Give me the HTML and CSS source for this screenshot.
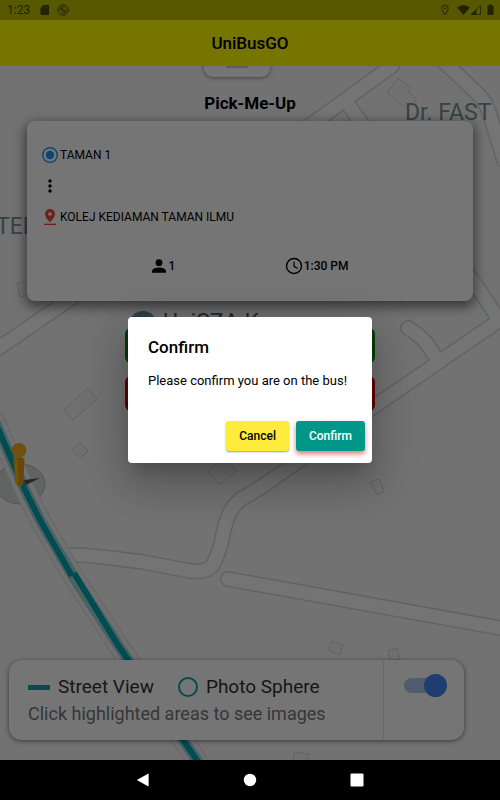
FILE: index.html
```
<!DOCTYPE html>
<html lang="en">

<head>
    <meta charset="UTF-8">
    <meta name="viewport" content="width=device-width, initial-scale=1.0">
    <title>UniBusGO</title>
    <link rel="stylesheet" href="styles.css">
</head>

<body>
    <div class="screen">
        <div class="status-bar">
            <span class="time">1:23</span>
            <svg width="10" height="12" viewBox="0 0 10 12"><path d="M3.5 1H8.500Q9 1 9 1.500V10.500Q9 11 8.500 11H1Q.5 11 .5 10.500V4Z" fill="currentColor"/><path d="M3.500 2.500V4M5.300 2.500V4M7.100 2.500V4" stroke="#8a8a00" stroke-width=".7"/></svg>
            <svg class="sync" width="12" height="12" viewBox="0 0 12 12" fill="none" stroke="currentColor"><circle cx="6" cy="6" r="5.300"/><path d="M3.200 7.600A3.200 3.200 0 0 1 8 3.500M8.900 4.600A3.200 3.200 0 0 1 4.200 8.600"/><path d="M4 4L8.500 8.500" stroke-width="1.500"/></svg>
            <span class="spacer"></span>
            <svg class="pin" width="8" height="12" viewBox="0 0 8 12" fill="none" stroke="currentColor"><path d="M4 10.800C2 8 .8 6.200.8 4.200A3.200 3.200 0 0 1 7.200 4.200C7.200 6.200 6 8 4 10.800Z"/><circle cx="4" cy="4.200" r="1" fill="currentColor" stroke="none"/></svg>
            <svg width="13" height="12" viewBox="0 0 13 12"><path d="M0 3.500Q6.500-1.500 13 3.500L6.500 11Z" fill="currentColor"/></svg>
            <svg class="signal" width="11" height="12" viewBox="0 0 11 12"><path d="M10.500 1.500V10.500H1.200Z" fill="none" stroke="currentColor" stroke-width=".8"/><path d="M6.500 5V11H.5Z" fill="currentColor"/></svg>
            <svg width="7" height="12" viewBox="0 0 7 12"><path d="M2.200.5H4.800V1.500H6.500V11H.5V1.500H2.200Z" fill="currentColor"/></svg>
        </div>

        <header class="app-bar">
            <h1>UniBusGO</h1>
        </header>

        <main class="map-area">
            <svg class="map" viewBox="0 66 500 694" preserveAspectRatio="xMidYMid slice" aria-hidden="true">
                <defs>
                    <g id="roads">
                        <path d="M-10 354L60 306L392 66"/>
                        <path d="M350 107L484 297L496 315"/>
                        <path d="M446 64L476 92Q485 100 489 112L504 160"/>
                        <path d="M72 555Q82 554 143 562L190 571Q208 573 213 564Q218 556 222 540C226 515 232 503 248 495C268 484 280 473 296 463L372 408L510 313"/>
                        <path d="M408 328Q424 338 429 347L438 361"/>
                        <path d="M228 579L500 628L520 631"/>
                    </g>
                </defs>
                <rect y="66" width="500" height="694" fill="#f8f8f8"/>
                <use href="#roads" class="road-edge"/>
                <use href="#roads" class="road"/>
                <g class="buildings">
                    <path d="M387 93L398 78L411 88L409 92L417 99L407 109Z"/>
                    <path d="M17 283L27 281L30 295L20 297Z"/>
                    <path d="M64 410L88 388L97 399L73 420Z"/>
                    <path d="M72 450L79 442L88 451L80 458Z"/>
                    <path d="M208 472L222 458L237 471L219 485Z"/>
                    <path d="M370 482L379 479L384 491L377 495Z"/>
                    <path d="M328 650L332 641L343 645L340 655Z"/>
                    <path d="M388 651L397 648L400 659L390 661Z"/>
                    <path d="M294 752L309 754L307 764L293 762Z"/>
                </g>
                <ellipse cx="20" cy="484" rx="25" ry="20" fill="#d5d8d8" stroke="#b5b9b9"/>
                <g class="route">
                    <path class="route-edge" d="M-8 415L25 490L40 520L73 576L118 645L205 772"/>
                    <path class="route-fill" d="M-8 415L25 490L40 520L73 576L118 645L205 772"/>
                    <path class="route-halo" d="M-8 415L25 490L40 520L73 576L118 645L205 772"/>
                    <path class="route-line" d="M-8 415L25 490L40 520L72 576M74 573L118 645L205 772"/>
                </g>
                <path d="M40 478L24 480L26 485Z" fill="#555"/>
                <path d="M13 458H24.500L23.500 483L21 487L16 484Z" fill="#e59b16"/>
                <path d="M16 459L17 484" stroke="#fbbc04" stroke-width="3"/>
                <circle cx="19" cy="450.500" r="7" fill="#f6b11a" stroke="#d88f10" stroke-width=".7"/>
                <circle cx="143" cy="325" r="14" fill="#6f8fa3"/>
                <g class="map-labels">
                    <text x="405" y="120">Dr. FAST</text>
                    <text x="-4" y="234">TEM</text>
                    <text x="163" y="330" class="poi">UniSZA K</text>
                </g>
            </svg>

            <div class="drag-tab"></div>

            <div class="content">
                <h2>Pick-Me-Up</h2>
                <section class="trip-card">
                    <div class="stop">
                        <svg width="16" height="16" viewBox="0 0 16 16"><circle cx="8" cy="8" r="7.300" fill="none" stroke="#2196f3" stroke-width="1.400"/><circle cx="8" cy="8" r="4.200" fill="#2196f3"/></svg>
                        <span>TAMAN 1</span>
                    </div>
                    <div class="stop">
                        <svg width="16" height="16" viewBox="0 0 16 16"><circle cx="8" cy="3" r="1.700"/><circle cx="8" cy="8" r="1.700"/><circle cx="8" cy="13" r="1.700"/></svg>
                    </div>
                    <div class="stop">
                        <svg width="16" height="16" viewBox="0 0 16 16" fill="#f44336"><path fill-rule="evenodd" d="M8 0A5 5 0 0 1 13 5C13 8.500 8 13.300 8 13.300S3 8.500 3 5A5 5 0 0 1 8 0ZM8 3.200A1.800 1.800 0 1 0 8 6.800A1.800 1.800 0 1 0 8 3.200Z"/><path d="M2 14.700H14V16H2Z"/></svg>
                        <span>KOLEJ KEDIAMAN TAMAN ILMU</span>
                    </div>
                    <div class="trip-info">
                        <div class="info">
                            <svg width="16" height="16" viewBox="0 0 16 16"><circle cx="8" cy="4.700" r="3.400"/><path d="M1 14.700V13C1 10.600 5.500 9.500 8 9.500S15 10.600 15 13V14.700Z"/></svg>
                            <span>1</span>
                        </div>
                        <div class="info">
                            <svg width="18" height="18" viewBox="0 0 18 18" fill="none" stroke="#000" stroke-width="1.400"><circle cx="9" cy="9" r="7.500"/><path d="M9 4.800V9.300L12.600 11.400" stroke-width="1.200"/></svg>
                            <span>1:30 PM</span>
                        </div>
                    </div>
                </section>
                <button class="ride-btn on-bus" type="button" aria-label="On the bus"></button>
                <button class="ride-btn cancel-ride" type="button" aria-label="Cancel pick-up"></button>
            </div>

            <div class="street-panel">
                <div class="legend">
                    <div class="legend-row">
                        <span class="line-key"></span>
                        <span>Street View</span>
                        <span class="sphere-key"></span>
                        <span>Photo Sphere</span>
                    </div>
                    <p>Click highlighted areas to see images</p>
                </div>
                <div class="toggle">
                    <input type="checkbox" class="switch" aria-label="Street View layer" checked>
                </div>
            </div>
        </main>

        <div class="scrim">
            <div class="dialog" role="dialog" aria-labelledby="dialog-title">
                <h3 id="dialog-title">Confirm</h3>
                <p>Please confirm you are on the bus!</p>
                <div class="actions">
                    <button class="btn btn-cancel" type="button">Cancel</button>
                    <button class="btn btn-confirm" type="button">Confirm</button>
                </div>
            </div>
        </div>
    </div>

    <nav class="nav-bar">
        <button type="button" aria-label="Back"><svg width="14" height="14" viewBox="0 0 14 14"><path d="M.8 7L12 .8Q12.600.6 12.600 1.200V12.800Q12.600 13.400 12 13.200Z"/></svg></button>
        <button type="button" aria-label="Home"><svg width="14" height="14" viewBox="0 0 14 14"><circle cx="7" cy="7" r="6.200"/></svg></button>
        <button type="button" aria-label="Overview"><svg width="14" height="14" viewBox="0 0 14 14"><rect x=".5" y=".5" width="13" height="13" rx="1"/></svg></button>
    </nav>
</body>

</html>
```

FILE: styles.css
```
* {
    box-sizing: border-box;
}

body {
    font-family: Roboto, sans-serif;
    margin: 0;
    min-height: 100vh;
    display: flex;
    flex-direction: column;
    background-color: #000;
    color: #000;
}

h1, h2, h3, p {
    margin: 0;
}

button {
    font-family: inherit;
    border: none;
    cursor: pointer;
}

.screen {
    position: relative;
    flex: 1;
    display: flex;
    flex-direction: column;
}

/* status bar */
.status-bar {
    height: 20px;
    padding: 0 6px 0 7px;
    display: flex;
    align-items: center;
    background-color: #bfbf00;
    color: #4d4d00;
}

.time {
    font-size: 12px;
    margin-right: 10px;
}

.sync {
    margin-left: 7px;
}

.spacer {
    flex: 1;
}

.pin {
    margin-right: 8px;
}

.signal {
    margin-right: 6px;
}

.app-bar {
    height: 46px;
    display: flex;
    align-items: center;
    justify-content: center;
    background-color: #ff0;
}

.app-bar h1 {
    font-size: 17px;
    font-weight: 500;
}

/* map */
.map-area {
    position: relative;
    flex: 1;
    display: flex;
    flex-direction: column;
    overflow: hidden;
}

.map {
    position: absolute;
    inset: 0;
    width: 100%;
    height: 100%;
}

.road-edge {
    fill: none;
    stroke: #d0d8d8;
    stroke-width: 16;
    stroke-linecap: round;
    stroke-linejoin: round;
}

.road {
    fill: none;
    stroke: #fdfdfd;
    stroke-width: 13;
    stroke-linecap: round;
    stroke-linejoin: round;
}

.buildings {
    fill: #f4f5f5;
    stroke: #d0d5d7;
}

.route {
    fill: none;
}

.route-edge {
    stroke: #dcdcdc;
    stroke-width: 21;
}

.route-fill {
    stroke: #f4f4f4;
    stroke-width: 19;
}

.route-halo {
    stroke: #a3d5da;
    stroke-width: 11;
}

.route-line {
    stroke: #00a5b0;
    stroke-width: 6;
}

.map-labels {
    font-size: 23px;
    fill: #78909c;
}

.poi {
    fill: #3f6379;
}

.drag-tab {
    position: absolute;
    top: -20px;
    left: 204px;
    width: 66px;
    height: 31px;
    padding: 20px 22px 0;
    border-radius: 9px;
    background-color: #fff;
    box-shadow: 0 1px 4px rgba(0, 0, 0, 0.4);
}

.drag-tab::before {
    content: "";
    display: block;
    height: 2px;
    background-color: #ccc;
}

.content {
    position: relative;
    display: flex;
    flex-direction: column;
    align-items: center;
    padding: 27px 27px 0;
}

.content h2 {
    font-size: 17px;
    line-height: 20px;
    font-weight: 700;
    margin-bottom: 8px;
}

.trip-card {
    width: 100%;
    padding: 18px 15px 10px;
    border-radius: 8px;
    background-color: #fff;
    box-shadow: 0 4px 12px 2px rgba(0, 0, 0, 0.5);
}

.stop {
    height: 31px;
    display: flex;
    align-items: center;
    gap: 2px;
    font-size: 12px;
}

.trip-info {
    height: 50px;
    margin-top: 9px;
    display: flex;
    align-items: center;
    justify-content: space-evenly;
    font-size: 12px;
    font-weight: 500;
}

.info {
    display: flex;
    align-items: center;
    gap: 1px;
}

.ride-btn {
    width: 250px;
    height: 35px;
    border-radius: 6px;
    margin-bottom: 13px;
}

.on-bus {
    margin-top: 27px;
    background-color: #008c0c;
}

.cancel-ride {
    background-color: #e00000;
}

/* street view legend */
.street-panel {
    position: relative;
    width: 91%;
    height: 80px;
    margin: auto 0 20px 9px;
    display: flex;
    border-radius: 13px;
    background-color: #fff;
    box-shadow: 0 1px 5px rgba(0, 0, 0, 0.5);
}

.legend {
    flex: 1;
    padding: 15px 0 0 19px;
    border-right: 1px solid #e4e4e4;
    color: #777;
    font-size: 18px;
    line-height: 26px;
    white-space: nowrap;
}

.legend-row {
    display: flex;
    align-items: center;
    color: #333;
    font-size: 19px;
    line-height: 24px;
    margin-bottom: 2px;
}

.line-key {
    width: 22px;
    height: 5px;
    margin-right: 8px;
    background-color: #00a5b0;
}

.sphere-key {
    width: 20px;
    height: 20px;
    margin: 0 8px 0 24px;
    border: 2px solid #00a5b0;
    border-radius: 50%;
}

.toggle {
    width: 80px;
    padding: 18px 0 0 20px;
}

.switch {
    appearance: none;
    display: flex;
    align-items: center;
    justify-content: flex-end;
    width: 34px;
    height: 15px;
    margin: 0;
    border-radius: 8px;
    background-color: #b3c8f3;
}

.switch::before {
    content: "";
    flex: none;
    width: 23px;
    height: 23px;
    margin-right: -9px;
    border-radius: 50%;
    background-color: #4285f4;
}

/* dialog */
.scrim {
    position: absolute;
    inset: 0;
    padding-top: 20px;
    display: flex;
    align-items: center;
    justify-content: center;
    background-color: rgba(0, 0, 0, 0.54);
}

.dialog {
    width: 244px;
    padding: 20px 7px 12px 20px;
    border-radius: 4px;
    background-color: #fff;
    box-shadow: 0 11px 15px -7px rgba(0, 0, 0, 0.2), 0 24px 38px 3px rgba(0, 0, 0, 0.14), 0 9px 46px 8px rgba(0, 0, 0, 0.12);
}

.dialog h3 {
    font-size: 17px;
    line-height: 20px;
    font-weight: 500;
}

.dialog p {
    margin: 14px 0 30px;
    font-size: 13px;
    line-height: 20px;
    white-space: nowrap;
}

.actions {
    display: flex;
    justify-content: flex-end;
    gap: 7px;
}

.btn {
    height: 30px;
    padding: 0 13px;
    border-radius: 3px;
    font-size: 12px;
    font-weight: 500;
}

.btn-cancel {
    background-color: #ffeb3b;
    color: #000;
    box-shadow: 0 1px 2px rgba(0, 0, 0, 0.4);
}

.btn-confirm {
    background-color: #009688;
    color: #fff;
    box-shadow: 0 3px 5px rgba(200, 40, 40, 0.6);
}

/* system navigation */
.nav-bar {
    height: 40px;
    display: flex;
    align-items: center;
    justify-content: center;
    gap: 93px;
    background-color: #000;
}

.nav-bar button {
    display: flex;
    padding: 0;
    background: none;
    fill: #fff;
}
```
